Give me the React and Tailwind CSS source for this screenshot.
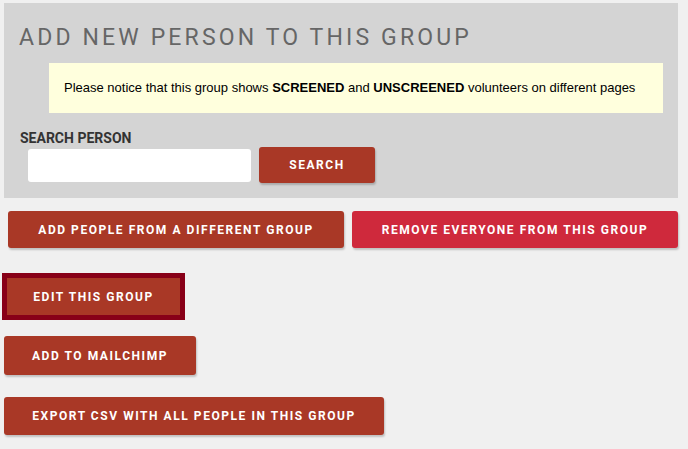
import React from "react";

// shared look of the red action buttons
const btn =
  "flex items-center justify-center text-white font-bold uppercase font-[Roboto,sans-serif] text-[12px] tracking-[1.55px] shadow-[1px_2px_2px_rgba(0,0,0,0.2)] rounded-[3px]";

export default function App() {
  return (
    <div className="min-h-[449px] w-[688px] bg-[#f0f0f0] pt-[3px] font-['Liberation_Sans',Arial,sans-serif]">
      {/* search panel */}
      <section className="ml-[4px] w-[674px] h-[195px] bg-[#d4d4d4] pt-[22px]">
        <h1 className="pl-[15px] font-[Roboto,sans-serif] text-[23px] leading-[26px] tracking-[3.15px] text-[#666] font-normal">
          ADD NEW PERSON TO THIS GROUP
        </h1>
        <div className="ml-[45px] mt-[12px] w-[614px] h-[50px] bg-[#ffffdd] flex items-center pl-[15px] text-[13px] text-black">
          <span>
            Please notice that this group shows <b>SCREENED</b> and <b>UNSCREENED</b> volunteers on different pages
          </span>
        </div>
        <label className="block pl-[16px] mt-[17px] font-[Roboto,sans-serif] text-[14px] leading-[16px] font-bold text-[#333]">
          SEARCH PERSON
        </label>
        <div className="flex items-center mt-[1px] pl-[24px] gap-[8px]">
          <input className="w-[223px] h-[33px] bg-white rounded-[3px] border-0 outline-none" />
          <button className={`${btn} w-[116px] h-[36px] bg-[#a93826]`}>Search</button>
        </div>
      </section>

      {/* group actions */}
      <div className="flex gap-[8px] ml-[8px] mt-[13px]">
        <button className={`${btn} w-[336px] h-[37px] bg-[#a93826]`}>Add people from a different group</button>
        <button className={`${btn} w-[326px] h-[37px] bg-[#cf293c]`}>Remove everyone from this group</button>
      </div>

      <div className="ml-[2px] mt-[25px]">
        <button className={`${btn} shadow-none rounded-none w-[183px] h-[47px] bg-[#a93826] border-[5px] border-[#880018]`}>
          Edit this group
        </button>
      </div>

      <div className="ml-[4px] mt-[16px]">
        <button className={`${btn} w-[192px] h-[39px] bg-[#a93826]`}>Add to Mailchimp</button>
      </div>

      <div className="ml-[4px] mt-[22px]">
        <button className={`${btn} w-[380px] h-[38px] bg-[#a93826]`}>Export CSV with all people in this group</button>
      </div>
    </div>
  );
}
